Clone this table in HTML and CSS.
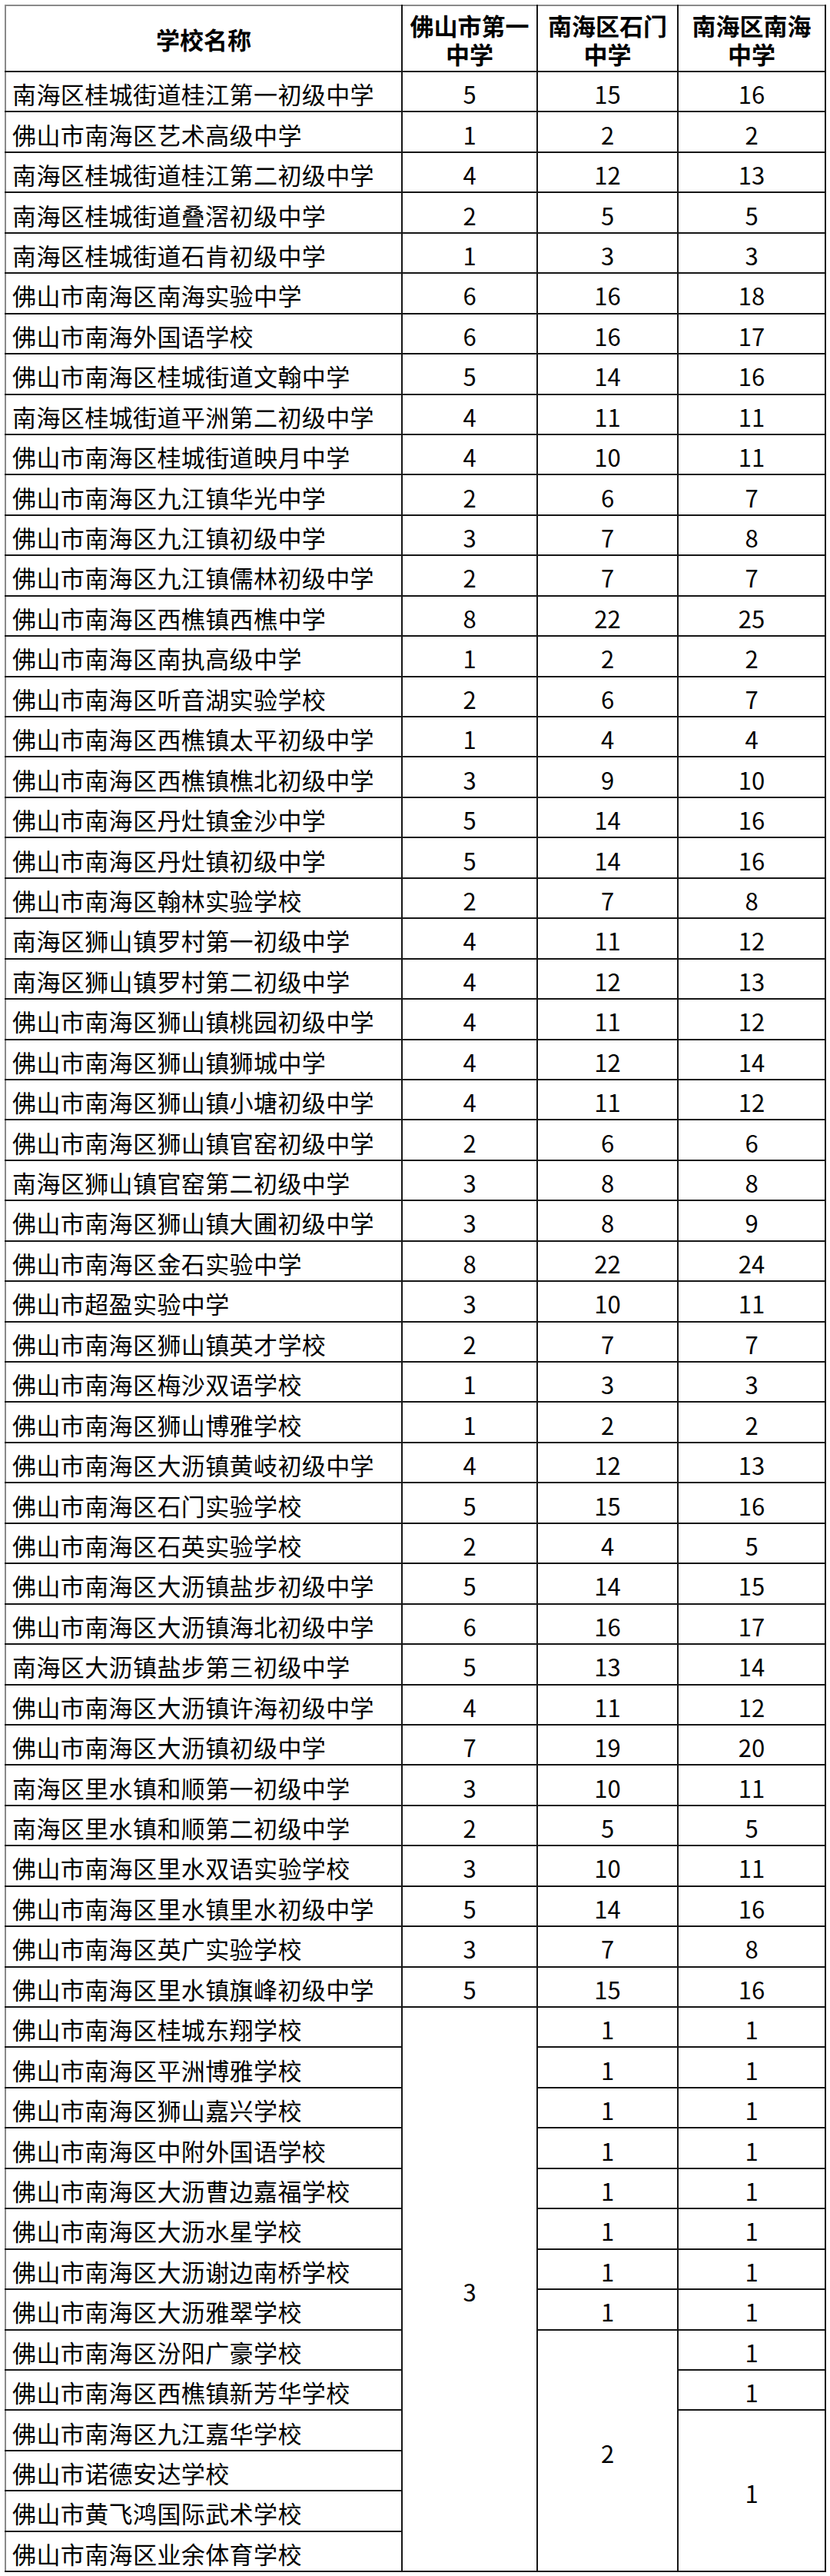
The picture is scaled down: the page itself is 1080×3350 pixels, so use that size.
FILE: index.html
```html
<!DOCTYPE html>
<html lang="zh-CN">
<head>
<meta charset="utf-8">
<title>学校名额分配表</title>
<link rel="stylesheet" href="styles.css">
</head>
<body>
<table class="quota">
<colgroup>
<col class="c-name"><col class="c-a"><col class="c-b"><col class="c-c">
</colgroup>
<thead>
<tr class="head">
<th class="name-h">学校名称</th>
<th><span class="hl">佛山市第一</span><span class="hl">中学</span></th>
<th><span class="hl">南海区石门</span><span class="hl">中学</span></th>
<th><span class="hl">南海区南海</span><span class="hl">中学</span></th>
</tr>
</thead>
<tbody>
<tr><td class="name">南海区桂城街道桂江第一初级中学</td><td>5</td><td>15</td><td>16</td></tr>
<tr><td class="name">佛山市南海区艺术高级中学</td><td>1</td><td>2</td><td>2</td></tr>
<tr><td class="name">南海区桂城街道桂江第二初级中学</td><td>4</td><td>12</td><td>13</td></tr>
<tr><td class="name">南海区桂城街道叠滘初级中学</td><td>2</td><td>5</td><td>5</td></tr>
<tr><td class="name">南海区桂城街道石肯初级中学</td><td>1</td><td>3</td><td>3</td></tr>
<tr><td class="name">佛山市南海区南海实验中学</td><td>6</td><td>16</td><td>18</td></tr>
<tr><td class="name">佛山市南海外国语学校</td><td>6</td><td>16</td><td>17</td></tr>
<tr><td class="name">佛山市南海区桂城街道文翰中学</td><td>5</td><td>14</td><td>16</td></tr>
<tr><td class="name">南海区桂城街道平洲第二初级中学</td><td>4</td><td>11</td><td>11</td></tr>
<tr><td class="name">佛山市南海区桂城街道映月中学</td><td>4</td><td>10</td><td>11</td></tr>
<tr><td class="name">佛山市南海区九江镇华光中学</td><td>2</td><td>6</td><td>7</td></tr>
<tr><td class="name">佛山市南海区九江镇初级中学</td><td>3</td><td>7</td><td>8</td></tr>
<tr><td class="name">佛山市南海区九江镇儒林初级中学</td><td>2</td><td>7</td><td>7</td></tr>
<tr><td class="name">佛山市南海区西樵镇西樵中学</td><td>8</td><td>22</td><td>25</td></tr>
<tr><td class="name">佛山市南海区南执高级中学</td><td>1</td><td>2</td><td>2</td></tr>
<tr><td class="name">佛山市南海区听音湖实验学校</td><td>2</td><td>6</td><td>7</td></tr>
<tr><td class="name">佛山市南海区西樵镇太平初级中学</td><td>1</td><td>4</td><td>4</td></tr>
<tr><td class="name">佛山市南海区西樵镇樵北初级中学</td><td>3</td><td>9</td><td>10</td></tr>
<tr><td class="name">佛山市南海区丹灶镇金沙中学</td><td>5</td><td>14</td><td>16</td></tr>
<tr><td class="name">佛山市南海区丹灶镇初级中学</td><td>5</td><td>14</td><td>16</td></tr>
<tr><td class="name">佛山市南海区翰林实验学校</td><td>2</td><td>7</td><td>8</td></tr>
<tr><td class="name">南海区狮山镇罗村第一初级中学</td><td>4</td><td>11</td><td>12</td></tr>
<tr><td class="name">南海区狮山镇罗村第二初级中学</td><td>4</td><td>12</td><td>13</td></tr>
<tr><td class="name">佛山市南海区狮山镇桃园初级中学</td><td>4</td><td>11</td><td>12</td></tr>
<tr><td class="name">佛山市南海区狮山镇狮城中学</td><td>4</td><td>12</td><td>14</td></tr>
<tr><td class="name">佛山市南海区狮山镇小塘初级中学</td><td>4</td><td>11</td><td>12</td></tr>
<tr><td class="name">佛山市南海区狮山镇官窑初级中学</td><td>2</td><td>6</td><td>6</td></tr>
<tr><td class="name">南海区狮山镇官窑第二初级中学</td><td>3</td><td>8</td><td>8</td></tr>
<tr><td class="name">佛山市南海区狮山镇大圃初级中学</td><td>3</td><td>8</td><td>9</td></tr>
<tr><td class="name">佛山市南海区金石实验中学</td><td>8</td><td>22</td><td>24</td></tr>
<tr><td class="name">佛山市超盈实验中学</td><td>3</td><td>10</td><td>11</td></tr>
<tr><td class="name">佛山市南海区狮山镇英才学校</td><td>2</td><td>7</td><td>7</td></tr>
<tr><td class="name">佛山市南海区梅沙双语学校</td><td>1</td><td>3</td><td>3</td></tr>
<tr><td class="name">佛山市南海区狮山博雅学校</td><td>1</td><td>2</td><td>2</td></tr>
<tr><td class="name">佛山市南海区大沥镇黄岐初级中学</td><td>4</td><td>12</td><td>13</td></tr>
<tr><td class="name">佛山市南海区石门实验学校</td><td>5</td><td>15</td><td>16</td></tr>
<tr><td class="name">佛山市南海区石英实验学校</td><td>2</td><td>4</td><td>5</td></tr>
<tr><td class="name">佛山市南海区大沥镇盐步初级中学</td><td>5</td><td>14</td><td>15</td></tr>
<tr><td class="name">佛山市南海区大沥镇海北初级中学</td><td>6</td><td>16</td><td>17</td></tr>
<tr><td class="name">南海区大沥镇盐步第三初级中学</td><td>5</td><td>13</td><td>14</td></tr>
<tr><td class="name">佛山市南海区大沥镇许海初级中学</td><td>4</td><td>11</td><td>12</td></tr>
<tr><td class="name">佛山市南海区大沥镇初级中学</td><td>7</td><td>19</td><td>20</td></tr>
<tr><td class="name">南海区里水镇和顺第一初级中学</td><td>3</td><td>10</td><td>11</td></tr>
<tr><td class="name">南海区里水镇和顺第二初级中学</td><td>2</td><td>5</td><td>5</td></tr>
<tr><td class="name">佛山市南海区里水双语实验学校</td><td>3</td><td>10</td><td>11</td></tr>
<tr><td class="name">佛山市南海区里水镇里水初级中学</td><td>5</td><td>14</td><td>16</td></tr>
<tr><td class="name">佛山市南海区英广实验学校</td><td>3</td><td>7</td><td>8</td></tr>
<tr><td class="name">佛山市南海区里水镇旗峰初级中学</td><td>5</td><td>15</td><td>16</td></tr>
<tr><td class="name">佛山市南海区桂城东翔学校</td><td rowspan="14">3</td><td>1</td><td>1</td></tr>
<tr><td class="name">佛山市南海区平洲博雅学校</td><td>1</td><td>1</td></tr>
<tr><td class="name">佛山市南海区狮山嘉兴学校</td><td>1</td><td>1</td></tr>
<tr><td class="name">佛山市南海区中附外国语学校</td><td>1</td><td>1</td></tr>
<tr><td class="name">佛山市南海区大沥曹边嘉福学校</td><td>1</td><td>1</td></tr>
<tr><td class="name">佛山市南海区大沥水星学校</td><td>1</td><td>1</td></tr>
<tr><td class="name">佛山市南海区大沥谢边南桥学校</td><td>1</td><td>1</td></tr>
<tr><td class="name">佛山市南海区大沥雅翠学校</td><td>1</td><td>1</td></tr>
<tr><td class="name">佛山市南海区汾阳广豪学校</td><td rowspan="6">2</td><td>1</td></tr>
<tr><td class="name">佛山市南海区西樵镇新芳华学校</td><td>1</td></tr>
<tr><td class="name">佛山市南海区九江嘉华学校</td><td rowspan="4">1</td></tr>
<tr><td class="name">佛山市诺德安达学校</td></tr>
<tr><td class="name">佛山市黄飞鸿国际武术学校</td></tr>
<tr><td class="name">佛山市南海区业余体育学校</td></tr>
</tbody>
</table>
</body>
</html>
```
FILE: styles.css
```css
html, body {
  margin: 0;
  padding: 0;
  background: #ffffff;
}

body {
  padding: 6px 0 0 6px;
  font-family: "Noto Sans CJK SC", "Noto Sans", "Liberation Sans", sans-serif;
  color: #000;
}

.quota {
  border-collapse: collapse;
  table-layout: fixed;
  width: 1067px;
  border-top: 2px solid #8a8a8a;
  border-left: 2px solid #8a8a8a;
}

.c-name { width: 516px; }
.c-a { width: 176px; }
.c-b { width: 183px; }
.c-c { width: 192px; }

.quota th,
.quota td {
  border: 2px solid #161616;
  padding: 0;
  text-align: center;
  vertical-align: middle;
  font-size: 31px;
  font-weight: 400;
  line-height: 36px;
  overflow: hidden;
  white-space: nowrap;
}

.quota thead th {
  font-weight: 700;
  height: 82px;
  padding-top: 2px;
}

.quota thead th .hl {
  display: block;
  line-height: 37px;
}

.quota thead th,
.quota tbody tr:first-child td {
  border-top-color: #8a8a8a;
}

.quota tbody tr {
  height: 52.45px;
}

.quota tbody td {
  padding-top: 6px;
}

.quota tbody td.name {
  text-align: left;
  padding-left: 8px;
  letter-spacing: 0.4px;
  border-left-color: #8a8a8a;
}

.quota thead th.name-h {
  border-left-color: #8a8a8a;
}
```
